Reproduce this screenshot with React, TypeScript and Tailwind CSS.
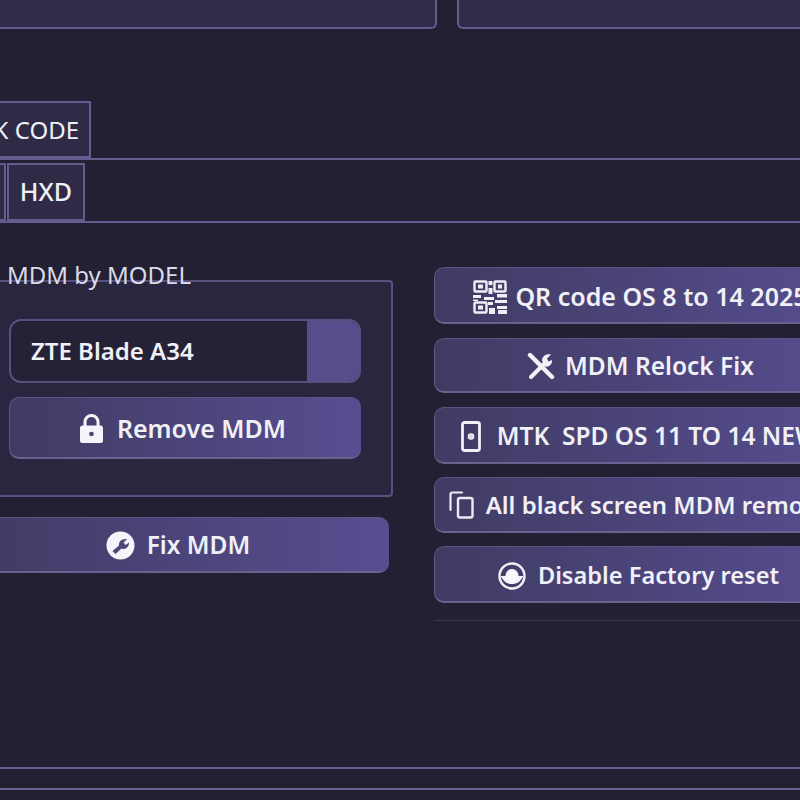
import React from "react";

const font = { fontFamily: '"Noto Sans", "Open Sans", sans-serif' };

function Qr() {
  return (
    <svg width="34" height="34" viewBox="0 0 34 34" fill="none">
      <g stroke="#eeeef6" strokeWidth="2.4">
        <rect x="1.5" y="1.5" width="12" height="10" rx="1" />
        <rect x="21.5" y="1.5" width="11" height="10" rx="1" />
        <rect x="1.5" y="22.5" width="12" height="10" rx="1" />
      </g>
      <g fill="#eeeef6">
        <rect x="5" y="4.5" width="5" height="4" />
        <rect x="25" y="4.5" width="4" height="4" />
        <rect x="5" y="25.5" width="5" height="4" />
        <rect x="15.5" y="1" width="4" height="4" />
        <rect x="15.5" y="8" width="4" height="6" />
        <rect x="0" y="15" width="8" height="3" />
        <rect x="11" y="17" width="10" height="3" />
        <rect x="24" y="14" width="10" height="3.5" />
        <rect x="0" y="19.5" width="5" height="1.5" />
        <rect x="15" y="22" width="5" height="3" />
        <rect x="22" y="20" width="12" height="3" />
        <rect x="16" y="28" width="6" height="6" />
        <rect x="24" y="26" width="10" height="3" />
        <rect x="25" y="30" width="9" height="4" />
      </g>
    </svg>
  );
}

function Tools() {
  return (
    <svg width="28" height="28" viewBox="0 0 28 28" fill="none">
      <path d="M3 3 L25 25" stroke="#f2f2f8" strokeWidth="4.4" strokeLinecap="round" />
      <path d="M4 25 L17 12" stroke="#f2f2f8" strokeWidth="4" strokeLinecap="round" />
      <path d="M15 8.5 C15 4.5 19 1.5 24 2.5 L20 6.5 L21.5 9.5 L25 8 C25.5 12 22 15.5 18 14.5 Z" fill="#f2f2f8" />
    </svg>
  );
}

function Phone() {
  return (
    <svg width="20" height="31" viewBox="0 0 20 31" fill="none">
      <rect x="1.5" y="1.5" width="17" height="28" rx="2" stroke="#f0f0f7" strokeWidth="2.8" />
      <circle cx="10" cy="15.5" r="2.6" fill="#d6d4e6" stroke="#f0f0f7" strokeWidth="1.4" />
    </svg>
  );
}

function CopyIcon() {
  return (
    <svg width="25" height="28" viewBox="0 0 25 28" fill="none">
      <path d="M13 1.5 H3.5 Q1.5 1.5 1.5 3.5 V19" stroke="#ecebf4" strokeWidth="2.2" strokeLinecap="round" />
      <rect x="9" y="7" width="14.5" height="19.5" rx="2" stroke="#ecebf4" strokeWidth="2.4" />
    </svg>
  );
}

function Disc() {
  return (
    <svg width="28" height="28" viewBox="0 0 28 28" fill="none">
      <circle cx="14" cy="14" r="12.5" stroke="#f2f2f8" strokeWidth="2.4" />
      <path d="M2.5 14 H25.5 C22 20 19 22 14 22 C9 22 6 20 2.5 14 Z" fill="#f2f2f8" />
      <circle cx="14" cy="13.5" r="6.5" fill="#f8f8fc" />
    </svg>
  );
}

function Lock() {
  return (
    <svg width="23" height="29" viewBox="0 0 23 29" fill="none">
      <path d="M5 13 V8 a6.5 6.5 0 0 1 13 0 V13" stroke="#f4f4fa" strokeWidth="3" />
      <rect x="0" y="11.5" width="23" height="17.5" rx="2.5" fill="#f4f4fa" />
      <circle cx="11.5" cy="20" r="2.3" fill="#4a4373" />
    </svg>
  );
}

function FixIcon() {
  return (
    <svg width="29" height="29" viewBox="0 0 29 29" fill="none">
      <circle cx="14.5" cy="14.5" r="14" fill="#f4f4fa" />
      <path d="M6.5 20 L13 14.5 C12.5 10.5 16 7.5 21 8.2 L17.6 11.6 L19.5 14 L23 11.6 C23.5 16 19 19.5 15.5 17.5 L9.5 23 Z" fill="#4d4676" />
    </svg>
  );
}

function ActionButton({
  icon,
  label,
  className,
  labelClass,
}: {
  icon: React.ReactNode;
  label: string;
  className: string;
  labelClass: string;
}) {
  return (
    <button
      className={`${className} flex w-full items-center justify-center whitespace-pre rounded-[10px] border-b-2 border-l border-t border-b-[#68628f] border-l-[#5f5988] border-t-[#5a5484] bg-gradient-to-r from-[#403b63] to-[#574e91] font-semibold text-[#f0f0f7]`}
    >
      {icon}
      <span className={labelClass}>{label}</span>
    </button>
  );
}

export default function App() {
  return (
    <div style={font} className="flex h-[800px] w-[800px] flex-col overflow-hidden bg-[#232033] text-[#f0f0f7]">
      <div className="flex h-[29px] shrink-0 gap-[20px]">
        <div className="ml-[-20px] w-[457px] shrink-0 rounded-b-md border-x-2 border-b-2 border-[#625c90] bg-[#302c49]" />
        <div className="w-[400px] shrink-0 rounded-b-md border-x-2 border-b-2 border-[#625c90] bg-[#302c49]" />
      </div>

      <div className="mt-[72px] flex h-[59px] shrink-0 border-b-2 border-[#625c90]">
        <div className="ml-[-60px] flex h-[57px] w-[151px] shrink-0 items-center justify-end border-2 border-[#625c90] bg-[#2f2b47] pr-[10px] text-[24px]">
          LOCK CODE
        </div>
      </div>

      <div className="flex h-[63px] shrink-0 items-end border-b-2 border-[#625c90]">
        <div className="ml-[-20px] h-[58px] w-[26px] shrink-0 border-2 border-[#625c90] bg-[#2f2b47]" />
        <div className="ml-[1px] flex h-[58px] w-[78px] shrink-0 items-center justify-center border-2 border-[#625c90] bg-[#2f2b47] text-[25px] font-medium">
          HXD
        </div>
      </div>

      <div className="flex shrink-0">
        <div className="ml-[-20px] mt-[57px] w-[413px] shrink-0">
          <div className="relative flex h-[217px] flex-col gap-[14px] rounded-[4px] border-2 border-[#57517f] bg-[#2a2640] pb-[37px] pl-[27px] pr-[30px] pt-[37px]">
            <span className="absolute left-[25px] top-[-23px] text-[24px] leading-[32px] text-[#dcdbe8]">MDM by MODEL</span>
            <div className="flex h-[64px] shrink-0 overflow-hidden rounded-[12px] border-2 border-[#57517f] bg-[#252136]">
              <div className="flex flex-1 items-center pl-[20px] text-[24px] font-semibold">ZTE Blade A34</div>
              <div className="w-[52px] bg-[#564e8c]" />
            </div>
            <ActionButton
              icon={<Lock />}
              label="Remove MDM"
              className="h-[62px] shrink-0 gap-[14px] pr-[5px] pt-[2px]"
              labelClass="text-[25px]"
            />
          </div>
          <div className="ml-[-14px] mr-[4px] mt-[20px]">
            <ActionButton
              icon={<FixIcon />}
              label="Fix MDM"
              className="h-[56px] gap-[12px] pt-[2px]"
              labelClass="text-[24.5px]"
            />
          </div>
        </div>

        <div className="ml-[41px] mt-[44px] h-[354px] w-[412px] shrink-0 border-b border-[#3a3558] pb-[17px]">
          <ActionButton
            icon={<Qr />}
            label="QR code OS 8 to 14 2025"
            className="h-[57px] gap-[8px] pt-[4px]"
            labelClass="text-[25px]"
          />
          <ActionButton
            icon={<Tools />}
            label="MDM Relock Fix"
            className="mt-[14px] h-[55px] gap-[10px] pt-[2px]"
            labelClass="text-[24.5px]"
          />
          <ActionButton
            icon={<Phone />}
            label="MTK  SPD OS 11 TO 14 NEW"
            className="mt-[14px] h-[57px] gap-[16px] pr-[2px] pt-[2px]"
            labelClass="text-[24.5px]"
          />
          <ActionButton
            icon={<CopyIcon />}
            label="All black screen MDM remove"
            className="mt-[13px] h-[56px] gap-[12px] pr-[2px] pt-[1px]"
            labelClass="text-[24px]"
          />
          <ActionButton
            icon={<Disc />}
            label="Disable Factory reset"
            className="mt-[13px] h-[57px] gap-[12px] pr-[4px] pt-[4px]"
            labelClass="text-[23.6px]"
          />
        </div>
      </div>

      <div className="mb-[10px] mt-auto shrink-0">
        <div className="h-[21px] border-t-2 border-[#66618f]" />
        <div className="border-t-2 border-[#66618f]" />
      </div>
    </div>
  );
}
